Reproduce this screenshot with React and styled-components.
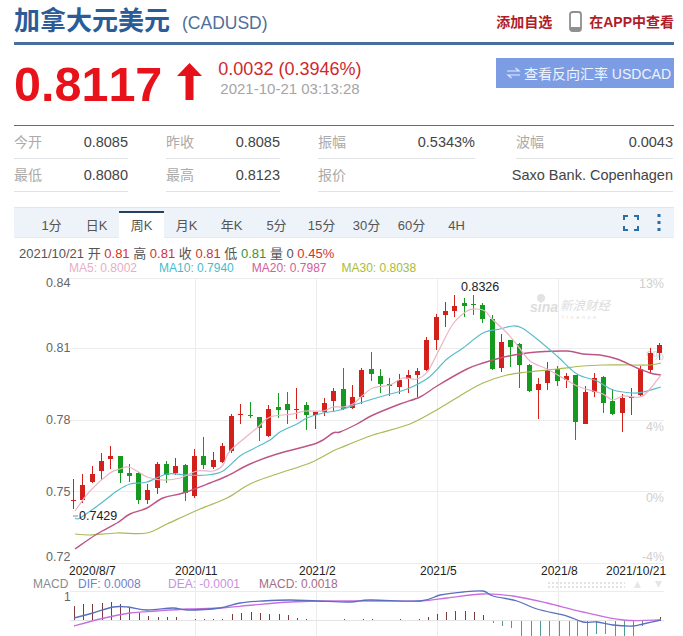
import React from "react";
import styled, { createGlobalStyle } from "styled-components";

const GlobalStyle = createGlobalStyle`
  html, body {
    margin: 0;
    padding: 0;
    background: #fff;
    overflow: hidden;
  }
  body {
    font-family: "Liberation Sans", "Noto Sans CJK SC", sans-serif;
  }
`;

const Page = styled.div`
  width: 683px;
  height: 636px;
  box-sizing: border-box;
  padding: 0 9px 0 14px;
  overflow: hidden;
`;

const TitleRow = styled.div`
  display: flex;
  align-items: center;
  height: 42px;
  border-bottom: 3px solid #47709f;
`;
const Title = styled.h1`
  margin: 0;
  font-size: 26px;
  line-height: 30px;
  font-weight: bold;
  color: #2b5c98;
`;
const Code = styled.span`
  margin-left: 12px;
  margin-top: 4px;
  font-size: 17.5px;
  color: #50709a;
`;
const HeaderLinks = styled.div`
  margin-left: auto;
  display: flex;
  align-items: center;
  color: #b01c2a;
  font-size: 14px;
  font-weight: bold;
`;
const AppLink = styled.span`
  display: flex;
  align-items: center;
  margin-left: 17px;
  gap: 7px;
`;

const PriceRow = styled.div`
  display: flex;
  height: 80px;
`;
const Price = styled.div`
  margin-top: 12px;
  font-size: 48.5px;
  line-height: 54px;
  font-weight: bold;
  font-kerning: none;
  color: #e8131a;
`;
const UpArrow = styled.svg`
  margin: 18px 0 0 15px;
`;
const Change = styled.div`
  margin: 14px 0 0 16px;
`;
const ChangeValue = styled.div`
  font-size: 18px;
  line-height: 20px;
  color: #d0282f;
`;
const ChangeTime = styled.div`
  margin-top: 1px;
  margin-left: 2px;
  font-size: 15px;
  line-height: 18px;
  color: #a5a5a5;
`;
const ReverseButton = styled.div`
  margin: 13px 0 0 auto;
  width: 178px;
  height: 30px;
  display: flex;
  align-items: center;
  justify-content: flex-end;
  gap: 3px;
  padding-right: 3px;
  box-sizing: border-box;
  background: #7c9de4;
  color: #eef3fd;
  font-size: 14px;
`;

const Stats = styled.div`
  display: grid;
  width: 660px;
  grid-template-columns: 114px 38px 114px 38px 157px 41px 157px;
  border-top: 1px solid #4f7590;
`;
const Stat = styled.div`
  grid-column: ${(p) => p.$col} / span ${(p) => p.$span || 1};
  height: 33px;
  box-sizing: border-box;
  padding-top: 8px;
  display: flex;
  justify-content: space-between;
  border-bottom: 1px solid #dfe3e6;
  font-size: 14.5px;
  line-height: 17px;
`;
const StatLabel = styled.span`
  color: #aaa;
  font-size: 14px;
`;
const StatValue = styled.span`
  color: #444;
`;

const Tabs = styled.div`
  display: flex;
  align-items: flex-end;
  margin-top: 15px;
  height: 31px;
  width: 660px;
  padding-left: 15px;
  box-sizing: border-box;
  background: #edf3f9;
  border-top: 1px solid #e0e7ee;
  border-bottom: 1px solid #e4eaf0;
`;
const Tab = styled.div`
  width: 45px;
  height: 27px;
  margin-bottom: -1px;
  box-sizing: border-box;
  text-align: center;
  font-size: 13px;
  line-height: 26px;
  color: #555;
  background: ${(p) => (p.$active ? "#fff" : "transparent")};
  border-top: 2px solid ${(p) => (p.$active ? "#23425f" : "transparent")};
`;
const TabTools = styled.div`
  margin-left: auto;
  align-self: center;
  display: flex;
  align-items: center;
  gap: 18px;
  padding-right: 13px;
`;

const InfoRow = styled.div`
  margin: 8px 0 0 5px;
  height: 15px;
  font-size: 13px;
  line-height: 15px;
  color: #555;
  white-space: pre;
`;
const Num = styled.span`
  color: ${(p) => p.$color};
`;
const MaRow = styled.div`
  display: flex;
  height: 14px;
  font-size: 12px;
  line-height: 14px;
`;
const MaItem = styled.span`
  margin-left: ${(p) => p.$left}px;
  color: ${(p) => p.$color};
`;

const Chart = styled.svg`
  display: block;
  margin-left: -14px;
  font-family: "Liberation Sans", "Noto Sans CJK SC", sans-serif;
`;

const tabs = ["1分", "日K", "周K", "月K", "年K", "5分", "15分", "30分", "60分", "4H"];

// color, high, body top, body bottom, low (pixel y)
const R = "#d3201a";
const G = "#16991f";
const candles = [
  [R, 478, 499, 500, 508], [R, 473, 484, 499, 502], [R, 465, 473, 481, 482], [R, 452, 460, 470, 479],
  [R, 445, 455, 458, 468], [G, 455, 455, 472, 482], [G, 463, 472, 475, 481], [G, 471, 472, 499, 503],
  [R, 483, 489, 499, 503], [R, 461, 463, 487, 493], [G, 460, 463, 474, 482], [R, 457, 465, 472, 474],
  [G, 463, 464, 492, 500], [R, 448, 455, 495, 497], [G, 436, 455, 464, 468], [R, 451, 459, 466, 468],
  [R, 442, 445, 461, 462], [R, 413, 415, 450, 452], [R, 403, 413, 414, 423], [G, 401, 414, 415, 417],
  [G, 416, 416, 427, 440], [R, 404, 408, 435, 436], [G, 392, 406, 409, 417], [G, 391, 403, 409, 423],
  [R, 387, 408, 409, 418], [G, 401, 404, 414, 429], [R, 411, 411, 414, 428], [R, 397, 402, 411, 415],
  [R, 387, 390, 400, 410], [G, 367, 388, 408, 409], [R, 384, 396, 407, 408], [R, 367, 369, 396, 403],
  [G, 351, 368, 373, 380], [G, 368, 375, 383, 392], [G, 377, 383, 385, 395], [R, 373, 379, 386, 393],
  [R, 369, 374, 378, 392], [R, 367, 370, 374, 396], [R, 336, 339, 369, 370], [R, 313, 316, 339, 349],
  [R, 301, 310, 314, 326], [R, 294, 305, 310, 316], [G, 297, 302, 305, 316], [G, 294, 303, 304, 314],
  [G, 302, 304, 318, 322], [G, 314, 318, 368, 369], [R, 333, 341, 367, 371], [G, 339, 339, 346, 366],
  [G, 342, 343, 364, 387], [G, 363, 364, 390, 391], [R, 377, 383, 389, 418], [R, 361, 369, 382, 389],
  [G, 365, 368, 380, 385], [R, 372, 375, 379, 387], [G, 374, 374, 421, 439], [R, 385, 391, 423, 423],
  [R, 372, 377, 391, 396], [G, 375, 376, 402, 412], [G, 388, 400, 413, 414], [R, 393, 397, 412, 431],
  [R, 387, 396, 397, 414], [R, 365, 368, 394, 395], [R, 347, 352, 369, 372], [R, 342, 344, 352, 359],
];

const ma5 = "75,510 90,490 110,472 120,468 128,466 137,470 147,476 163,479 180,477 197,470 213,470 223,464 230,450 257,427 270,416 293,413 305,410 323,410 333,406 343,406 353,403 362,395 373,387 390,384 403,377 417,378 428,370 440,347 453,323 467,310 477,308 485,310 492,318 507,332 518,345 530,360 547,368 563,377 577,385 593,390 603,393 613,399 623,395 640,396 650,388 661,374";
const ma10 = "75,517 80,517 100,503 117,490 130,483 147,481 167,473 187,474 207,474 223,470 240,455 253,448 270,439 280,431 297,423 307,417 323,412 340,409 360,402 383,395 407,388 428,377 447,358 463,347 483,332 500,328 513,325 522,327 537,338 557,355 577,373 597,380 613,389 633,392 643,391 661,386";
const ma20 = "75,548 97,533 117,522 130,513 147,507 163,497 183,492 210,482 227,475 250,463 277,453 317,442 333,432 340,431 357,423 373,414 400,403 420,396 437,385 467,368 483,362 500,357 520,353 537,351 567,350 583,353 600,354 617,358 637,367 650,372 661,374";
const ma30 = "75,533 90,534 117,532 147,532 167,523 200,508 227,497 250,483 277,473 310,462 333,450 340,447 373,434 410,423 440,407 463,393 483,382 507,374 527,371 557,368 583,365 603,364 633,364 650,364 661,362";
const dif = "74,617 93,612 113,606 128,606 147,609 173,607 187,609 220,607 240,602 263,600 290,599 317,600 350,601 370,599 420,600 440,594 463,591 483,590 493,595 517,600 537,608 567,615 583,621 597,621 613,624 633,625 643,623 661,619";
const dea = "74,625 100,618 130,612 157,610 187,608 220,607 253,604 290,601 320,600 370,600 420,600 447,597 483,593 513,595 547,602 583,611 623,619 661,619";

// catmull-rom through the read-off points, the lines are soft in the chart
const smooth = (str) => {
  const p = str.split(" ").map((s) => s.split(",").map(Number));
  let d = `M${p[0][0]} ${p[0][1]}`;
  for (let i = 0; i < p.length - 1; i++) {
    const a = p[i - 1] || p[i];
    const b = p[i];
    const c = p[i + 1];
    const e = p[i + 2] || c;
    const c1x = b[0] + (c[0] - a[0]) / 6;
    const c1y = b[1] + (c[1] - a[1]) / 6;
    const c2x = c[0] - (e[0] - b[0]) / 6;
    const c2y = c[1] - (e[1] - b[1]) / 6;
    d += ` C${c1x.toFixed(1)} ${c1y.toFixed(1)} ${c2x.toFixed(1)} ${c2y.toFixed(1)} ${c[0]} ${c[1]}`;
  }
  return d;
};

// x, top of the bar above the zero line
const macdUp = [
  [74, 605], [83, 603], [92, 603], [102, 602], [111, 601], [120, 603], [129, 606], [139, 612], [148, 615],
  [158, 616], [167, 616], [176, 616], [195, 618], [204, 618], [213, 618], [222, 618], [232, 613], [241, 612],
  [251, 611], [260, 612], [269, 613], [279, 613], [288, 614], [297, 617], [306, 618], [344, 618], [363, 618],
  [372, 618], [400, 618], [419, 618], [428, 616], [437, 613], [446, 611], [455, 610], [465, 610], [474, 611],
  [483, 614], [660, 616],
];
// x, bottom of the bar under the zero line
const macdDown = [
  [493, 622], [502, 625], [511, 627], [521, 636], [531, 636], [540, 636], [549, 636], [559, 636], [569, 636],
  [577, 636], [587, 636], [596, 633], [605, 633], [615, 636], [624, 636], [633, 636], [642, 625],
];

const yLabels = [["0.84", 286], ["0.81", 351], ["0.78", 423], ["0.75", 495], ["0.72", 560]];
const pctLabels = [["13%", 287], ["9%", 359], ["4%", 430], ["0%", 501], ["-4%", 560]];
const xLabels = [["2020/8/7", 69], ["2020/11", 175], ["2021/2", 299], ["2021/5", 420], ["2021/8", 541], ["2021/10/21", 606]];

const KChart = () => (
  <>
    {[277, 347, 419, 490, 562, 590].map((y) => (
      <line key={y} x1="70" x2="664" y1={y + 0.5} y2={y + 0.5} stroke="#ececec" />
    ))}
    {[195.5, 316.5, 437.5, 558.5].map((x) => (
      <line key={x} x1={x} x2={x} y1="277" y2="636" stroke="#ececec" />
    ))}
    <line x1="70" x2="664" y1="619.5" y2="619.5" stroke="#e4e4e4" />

    <g fill="#dcdcdc">
      <text x="530" y="311" fontSize="14" fontWeight="bold" fontStyle="italic">sina</text>
      <text x="560" y="309" fontSize="12.5" fontStyle="italic">新浪财经</text>
      <text x="562" y="318" fontSize="5" letterSpacing="3">finance</text>
    </g>
    <circle cx="541" cy="297" r="4" fill="#e2e2e2" />

    {yLabels.map(([t, y]) => (
      <text key={t} x="46" y={y} fontSize="12.5" fill="#666">{t}</text>
    ))}
    {pctLabels.map(([t, y]) => (
      <text key={t} x="664" y={y} fontSize="12.5" fill="#cfcfcf" textAnchor="end">{t}</text>
    ))}

    {candles.map(([c, hi, top, bottom, lo], i) => {
      const x = Math.round(73 + 9.3 * i);
      return (
        <g key={i}>
          <line x1={x + 0.5} x2={x + 0.5} y1={hi} y2={lo} stroke={c} />
          <rect x={x - 2} y={top} width="5" height={Math.max(bottom - top, 1)} fill={c} />
        </g>
      );
    })}

    <path d={smooth(ma30)} fill="none" stroke="#a9ba55" strokeWidth="1.2" />
    <path d={smooth(ma20)} fill="none" stroke="#bd5684" strokeWidth="1.4" />
    <path d={smooth(ma10)} fill="none" stroke="#59bcc9" strokeWidth="1.2" />
    <path d={smooth(ma5)} fill="none" stroke="#eab4c4" strokeWidth="1.2" />

    <text x="461" y="290" fontSize="12.5" fill="#222">0.8326</text>
    <line x1="73" x2="78" y1="515" y2="515" stroke="#888" />
    <text x="79" y="519" fontSize="12.5" fill="#222">0.7429</text>

    {xLabels.map(([t, x]) => (
      <text key={t} x={x} y="574" fontSize="12" fill="#222">{t}</text>
    ))}

    <text x="33" y="587" fontSize="12" fill="#8a8a8a">MACD</text>
    <text x="78" y="587" fontSize="12" fill="#6f80cc">DIF: 0.0008</text>
    <text x="168" y="587" fontSize="12" fill="#c98fe0">DEA: -0.0001</text>
    <text x="259" y="587" fontSize="12" fill="#a66c84">MACD: 0.0018</text>
    <text x="64" y="600" fontSize="12" fill="#666">1</text>

    <line x1="548" x2="625" y1="582" y2="582" stroke="#e2e2e2" strokeWidth="2" strokeDasharray="2 2" />
    <line x1="548" x2="625" y1="586" y2="586" stroke="#e2e2e2" strokeWidth="2" strokeDasharray="2 2" />
    <path d="M634 587 l3.5-7 3.5 7z M655 580 h7 l-3.5 7z" fill="#e6e6e6" />

    {macdUp.map(([x, y]) => (
      <line key={x} x1={x + 0.5} x2={x + 0.5} y1={y} y2="619" stroke="#7c3a3a" />
    ))}
    {macdDown.map(([x, y]) => (
      <line key={x} x1={x + 0.5} x2={x + 0.5} y1="620" y2={y} stroke="#4d9a96" />
    ))}
    <path d={smooth(dea)} fill="none" stroke="#c86fe0" strokeWidth="1.3" />
    <path d={smooth(dif)} fill="none" stroke="#5a6fc0" strokeWidth="1.3" />
  </>
);

export default function App() {
  return (
    <Page>
      <GlobalStyle />
      <TitleRow>
        <Title>加拿大元美元</Title>
        <Code>(CADUSD)</Code>
        <HeaderLinks>
          <span>添加自选</span>
          <AppLink>
            <svg width="13" height="21" viewBox="0 0 13 21">
              <rect x="1" y="1" width="11" height="19" rx="2.5" fill="none" stroke="#8f8f8f" strokeWidth="1.8" />
              <rect x="1" y="16" width="11" height="4" rx="1.5" fill="#8f8f8f" />
            </svg>
            <span>在APP中查看</span>
          </AppLink>
        </HeaderLinks>
      </TitleRow>

      <PriceRow>
        <Price>0.8117</Price>
        <UpArrow width="25" height="37" viewBox="0 0 25 37">
          <path d="M12.5 0 L25 13 H16.5 V37 H8.5 V13 H0 Z" fill="#e4101a" />
        </UpArrow>
        <Change>
          <ChangeValue>0.0032 (0.3946%)</ChangeValue>
          <ChangeTime>2021-10-21 03:13:28</ChangeTime>
        </Change>
        <ReverseButton>
          <svg width="15" height="14" viewBox="0 0 15 14" fill="none" stroke="#e4ebfb" strokeWidth="1.2">
            <path d="M1 5 H13 L9.5 2" />
            <path d="M14 9 H2 L5.5 12" />
          </svg>
          <span>查看反向汇率 USDCAD</span>
        </ReverseButton>
      </PriceRow>

      <Stats>
        <Stat $col={1}><StatLabel>今开</StatLabel><StatValue>0.8085</StatValue></Stat>
        <Stat $col={3}><StatLabel>昨收</StatLabel><StatValue>0.8085</StatValue></Stat>
        <Stat $col={5}><StatLabel>振幅</StatLabel><StatValue>0.5343%</StatValue></Stat>
        <Stat $col={7}><StatLabel>波幅</StatLabel><StatValue>0.0043</StatValue></Stat>
        <Stat $col={1}><StatLabel>最低</StatLabel><StatValue>0.8080</StatValue></Stat>
        <Stat $col={3}><StatLabel>最高</StatLabel><StatValue>0.8123</StatValue></Stat>
        <Stat $col={5} $span={3}><StatLabel>报价</StatLabel><StatValue>Saxo Bank. Copenhagen</StatValue></Stat>
      </Stats>

      <Tabs>
        {tabs.map((t) => (
          <Tab key={t} $active={t === "周K"}>{t}</Tab>
        ))}
        <TabTools>
          <svg width="16" height="16" viewBox="0 0 16 16" fill="none" stroke="#2b6ea6" strokeWidth="2">
            <path d="M1 5 V1 H5 M11 1 H15 V5 M15 11 V15 H11 M5 15 H1 V11" />
          </svg>
          <svg width="4" height="17" viewBox="0 0 4 17" fill="#2b6ea6">
            <rect x="0.5" y="0" width="3" height="3" />
            <rect x="0.5" y="7" width="3" height="3" />
            <rect x="0.5" y="14" width="3" height="3" />
          </svg>
        </TabTools>
      </Tabs>

      <InfoRow>
        2021/10/21 开 <Num $color="#d0342c">0.81</Num> 高 <Num $color="#d0342c">0.81</Num> 收{" "}
        <Num $color="#d0342c">0.81</Num> 低 <Num $color="#2f9a3a">0.81</Num> 量 0{" "}
        <Num $color="#d0342c">0.45%</Num>
      </InfoRow>
      <MaRow>
        <MaItem $left={55} $color="#e9aec4">MA5: 0.8002</MaItem>
        <MaItem $left={22} $color="#45bccb">MA10: 0.7940</MaItem>
        <MaItem $left={18} $color="#d0609a">MA20: 0.7987</MaItem>
        <MaItem $left={15} $color="#a8bb3a">MA30: 0.8038</MaItem>
      </MaRow>

      <Chart width="683" height="362" viewBox="0 274 683 362">
        <KChart />
      </Chart>
    </Page>
  );
}
